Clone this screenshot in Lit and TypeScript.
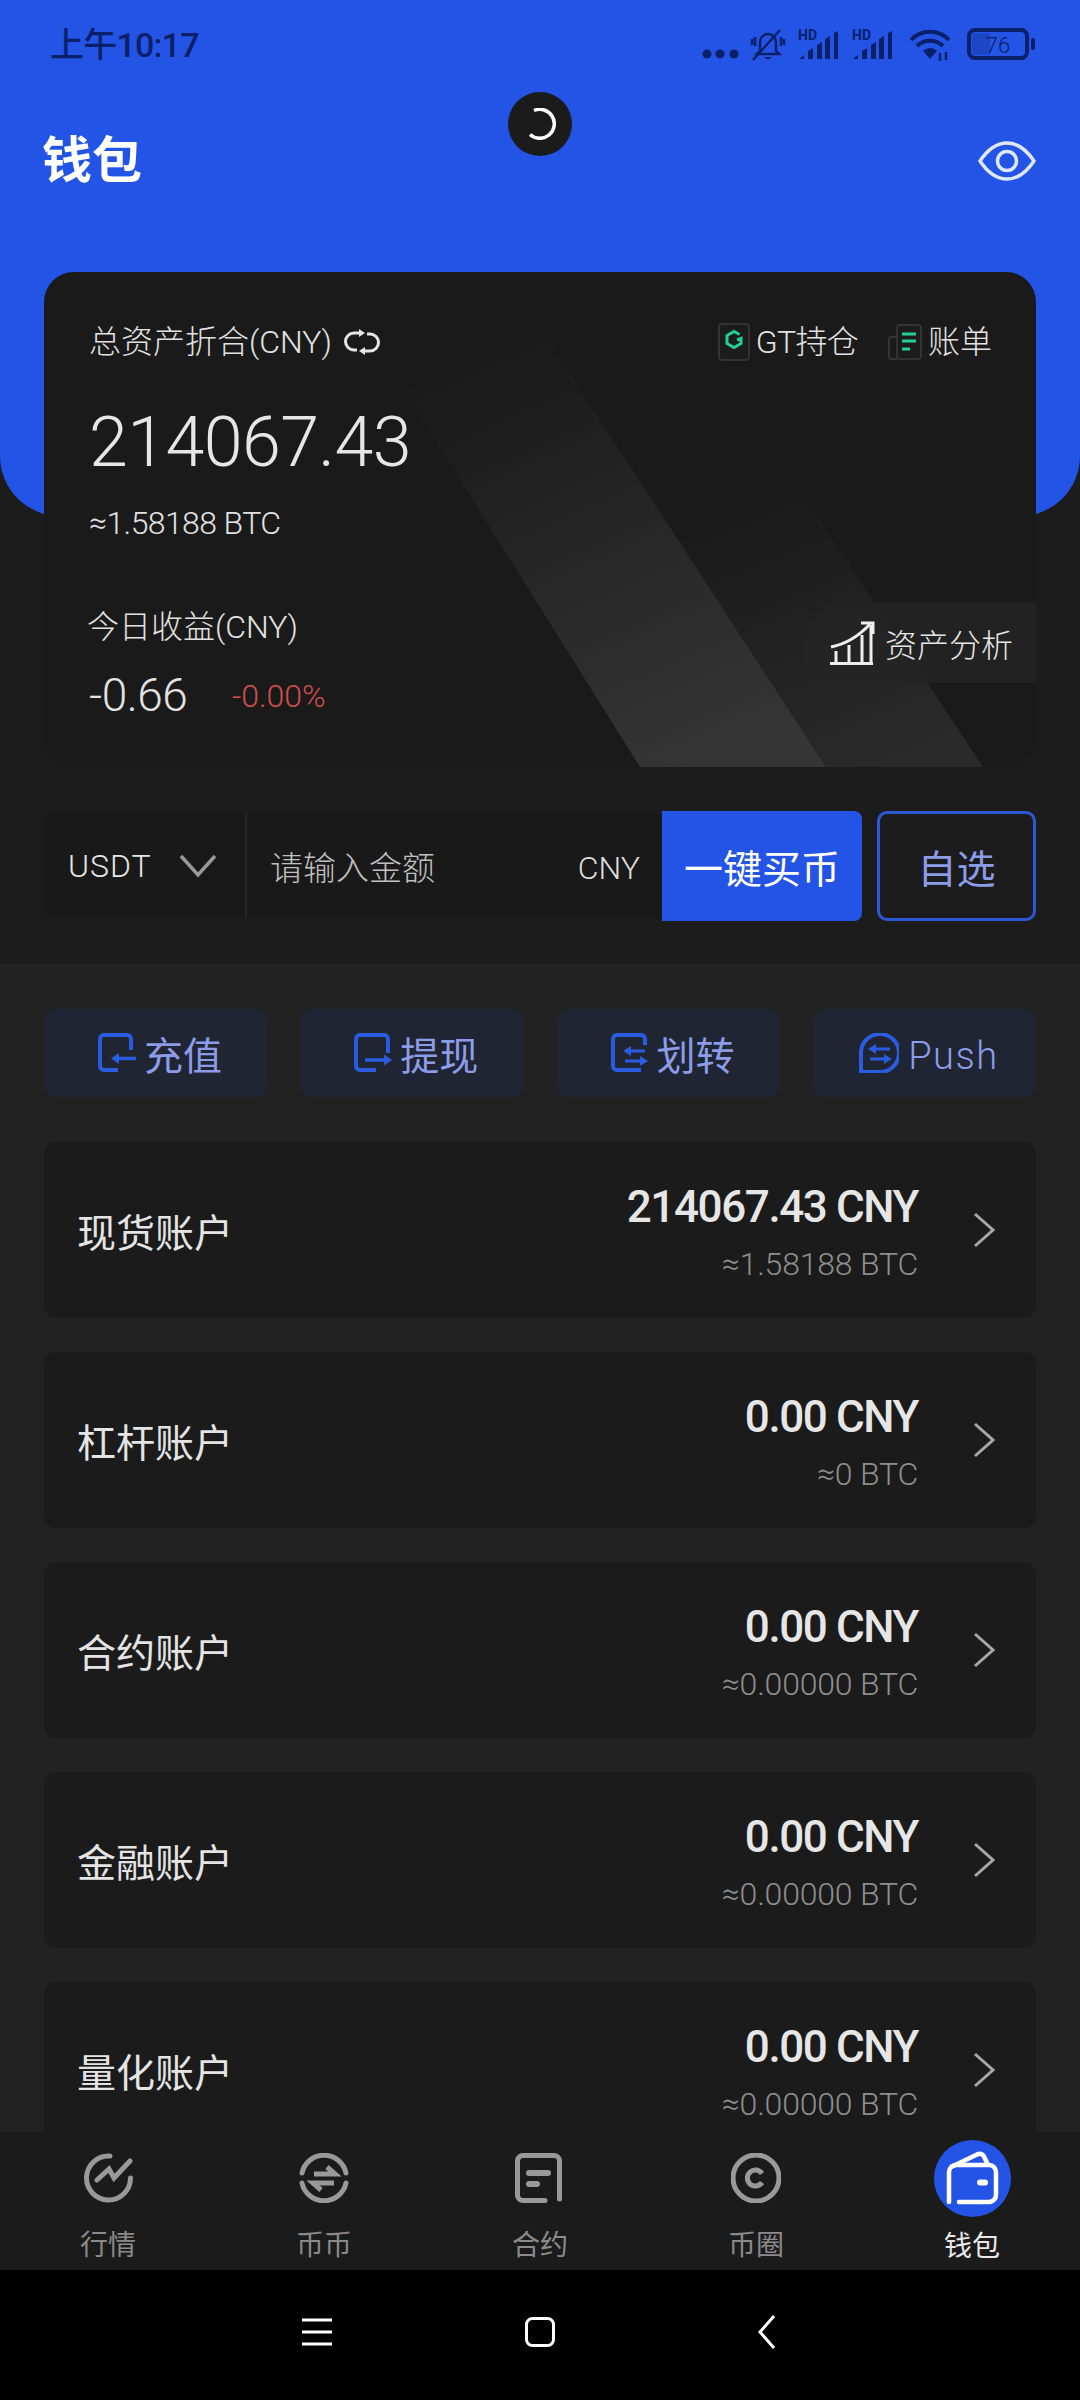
import { LitElement, html, css, svg } from "lit";
import { customElement } from "lit/decorators.js";

const accounts = [
  ["现货账户", "214067.43 CNY", "≈1.58188 BTC"],
  ["杠杆账户", "0.00 CNY", "≈0 BTC"],
  ["合约账户", "0.00 CNY", "≈0.00000 BTC"],
  ["金融账户", "0.00 CNY", "≈0.00000 BTC"],
  ["量化账户", "0.00 CNY", "≈0.00000 BTC"],
];

const signal = (cls: string) => html`<svg class=${cls} width="40" height="34" viewBox="0 0 40 34">
  <text x="0" y="12" font-family="Roboto" font-weight="700" font-size="14" fill="#0a2068">HD</text>
  <path d="M1 31 L6 27 V31Z M10 31 V23 l5 -3 V31Z M19 31 V17 l5 -3 V31Z M27 31 V11 l5 -3 V31Z M36 31 V5 l4 -2 V31Z" fill="#0a2068"/>
</svg>`;

const actionIcons = {
  in: svg`<path d="M33 17V6a4 4 0 0 0-4-4H6a4 4 0 0 0-4 4v27a4 4 0 0 0 4 4h14" fill="none" stroke="#2a5ce0" stroke-width="4"/><path d="M38 25.500H20" stroke="#2a5ce0" stroke-width="3.500"/><path d="M13 25.500l8-5.500v11z" fill="#2a5ce0"/>`,
  out: svg`<path d="M34 20V6a4 4 0 0 0-4-4H6a4 4 0 0 0-4 4v27a4 4 0 0 0 4 4h16" fill="none" stroke="#2a5ce0" stroke-width="4"/><path d="M11 27H30" stroke="#2a5ce0" stroke-width="3.500"/><path d="M38 27l-8-5.500v11z" fill="#2a5ce0"/>`,
  swap: svg`<path d="M34 12V6a4 4 0 0 0-4-4H6a4 4 0 0 0-4 4v27a4 4 0 0 0 4 4h24" fill="none" stroke="#2a5ce0" stroke-width="4"/><path d="M19 18H34M14 28H30" stroke="#2a5ce0" stroke-width="3"/><path d="M12 18l8-5v10z M37 28l-8-5v10z" fill="#2a5ce0"/>`,
  push: svg`<path d="M2 39V21a19 19 0 1 1 19 18z" fill="none" stroke="#2a5ce0" stroke-width="4" stroke-linejoin="round"/><path d="M16 16H31M11 26H26" stroke="#2a5ce0" stroke-width="3"/><path d="M9 16l8-5v10z M33 26l-8-5v10z" fill="#2a5ce0"/>`,
};

const actions: [string, keyof typeof actionIcons][] = [
  ["充值", "in"],
  ["提现", "out"],
  ["划转", "swap"],
  ["Push", "push"],
];

const tabIcons = [
  svg`<path d="M27 3A22 22 0 1 0 47.500 25" fill="none" stroke="#999" stroke-width="5" stroke-linecap="round"/><path d="M14 27L26 16l5 9L47 8" fill="none" stroke="#999" stroke-width="5" stroke-linecap="round"/>`,
  svg`<path d="M3 20A22.500 22.500 0 0 1 47 20M3 30A22.500 22.500 0 0 0 47 30" fill="none" stroke="#999" stroke-width="5" stroke-linecap="round"/><path d="M15 21H36L28 14M35 30H14L22 37" fill="none" stroke="#999" stroke-width="5"/>`,
  svg`<path d="M30 47.500H8a5.500 5.500 0 0 1-5.500-5.500V8A5.500 5.500 0 0 1 8 2.500H39a5.500 5.500 0 0 1 5.500 5.500V46" fill="none" stroke="#999" stroke-width="5" stroke-linecap="round"/><path d="M14 20H33M14 31H22" fill="none" stroke="#999" stroke-width="6" stroke-linecap="round"/>`,
  svg`<circle cx="25" cy="25" r="23" fill="none" stroke="#999" stroke-width="5"/><path d="M31 20.500A8 8 0 1 0 31 29.500" fill="none" stroke="#999" stroke-width="5"/>`,
];

const tabs = ["行情", "币币", "合约", "币圈"];

@customElement("app-root")
export class AppRoot extends LitElement {
  static styles = css`
    :host {
      display: flex;
      flex-direction: column;
      width: 1080px;
      height: 2400px;
      overflow: hidden;
      background: #000;
      font-family: Roboto, "Noto Sans CJK SC", sans-serif;
      color: #e6e6e6;
    }
    svg { display: block; flex: none; }
    .scroll { flex: 1; min-height: 0; overflow: hidden; background: #222222; }

    .top { background: #1c1c1c; padding-bottom: 43px; }
    .hero { background: #2354e6; height: 516px; border-radius: 0 0 60px 60px; box-sizing: border-box; }
    .status { height: 90px; display: flex; align-items: center; justify-content: space-between; padding: 0 45px 0 50px; box-sizing: border-box; color: #0a2068; }
    .time { font-size: 34px; line-height: 90px; font-weight: 500; letter-spacing: -0.800px; }
    .sicons { display: flex; align-items: center; }
    .s-bell { margin-left: 10px; }
    .s-sig1 { margin-left: 12px; }
    .s-sig2 { margin-left: 14px; }
    .s-wifi { margin-left: 17px; }
    .s-batt { margin-left: 16px; }
    .titlebar { display: flex; justify-content: space-between; align-items: center; height: 72px; padding: 0 44px 0 42px; margin-top: 35px; position: relative; }
    .title { font-size: 50px; font-weight: 700; color: #fff; line-height: 72px; }
    .spinner { position: absolute; left: 508px; top: -33px; width: 64px; height: 64px; border-radius: 50%; background: #1b1b1b; display: flex; align-items: center; justify-content: center; }

    .card { position: relative; margin: -244px 44px 0; height: 495px; border-radius: 30px; background: #1a1a1a; overflow: hidden; padding: 48px 0 0 45px; box-sizing: border-box; }
    .bands { position: absolute; inset: 0; }
    .row1 { position: relative; display: flex; justify-content: space-between; align-items: center; height: 44px; padding-right: 44px; }
    .label { font-size: 32px; line-height: 44px; display: flex; align-items: center; color: #e2e2e2; font-weight: 300; }
    .refresh { margin-left: 12px; }
    .links { display: flex; align-items: center; gap: 30px; }
    .link { display: flex; align-items: center; gap: 6px; font-size: 32px; line-height: 44px; color: #e2e2e2; font-weight: 300; }
    .link.gt { letter-spacing: -0.700px; }
    .big { position: relative; font-size: 70px; font-weight: 300; line-height: 80px; margin-top: 38px; letter-spacing: -0.600px; color: #e6e6e6; }
    .btc { position: relative; font-size: 32px; font-weight: 300; line-height: 40px; margin-top: 21px; letter-spacing: -0.600px; color: #e2e2e2; }
    .bottom { position: relative; display: flex; justify-content: space-between; align-items: flex-start; margin-top: 62px; }
    .today { margin-left: -2px; }
    .pnl { display: flex; align-items: center; margin-top: 21px; margin-left: 2px; }
    .pnl b { font-weight: 300; font-size: 46px; line-height: 50px; width: 143px; letter-spacing: -0.500px; color: #e2e2e2; }
    .pnl i { font-style: normal; font-weight: 300; font-size: 32px; color: #d24e4e; margin-top: 2px; }
    .analysis { display: flex; align-items: center; gap: 10px; height: 81px; padding: 0 23px 0 28px; background: rgba(36,36,36,.8); border-radius: 40px 0 0 40px; font-size: 32px; font-weight: 300; color: #e6e6e6; margin-top: -3px; }

    .buy { display: flex; height: 110px; margin: 44px 44px 0; }
    .select { width: 203px; margin: 3px 0; box-sizing: border-box; padding: 0 28px 0 24px; display: flex; justify-content: space-between; align-items: center; background: #191919; border-radius: 8px 0 0 8px; font-size: 32px; font-weight: 300; border-right: 2px solid #282828; letter-spacing: 1px; }
    .amount { flex: 1; margin: 3px 0; padding: 0 22px 0 23px; display: flex; justify-content: space-between; align-items: center; background: #191919; font-size: 33px; font-weight: 300; }
    .amount span:first-child { color: #c0c0c0; }
    .amount span:last-child { color: #ddd; font-size: 32px; padding-top: 4px; }
    .go { width: 200px; background: #2354e6; color: #fff; font-size: 39px; display: flex; align-items: center; justify-content: center; border-radius: 0 8px 8px 0; }
    .fav { width: 159px; margin-left: 15px; box-sizing: border-box; border: 3px solid #2c58d8; border-radius: 10px; color: #8d9ce8; font-size: 39px; display: flex; align-items: center; justify-content: center; }

    .actions { display: grid; grid-template-columns: repeat(4, 1fr); gap: 33px; margin: 45px 44px 0; }
    .action { height: 88px; background: #1f2533; border-radius: 12px; color: #8d9ce8; font-size: 39px; display: flex; align-items: center; justify-content: center; gap: 6px; padding-left: 9px; }
    .action .push { font-size: 38px; font-weight: 300; letter-spacing: 1.500px; padding-top: 6px; margin-left: 3px; }

    .accounts { display: flex; flex-direction: column; gap: 34px; margin: 45px 44px 0; }
    .acct { height: 176px; flex: none; background: #1b1b1b; border-radius: 12px; display: flex; align-items: center; padding: 0 41px 0 33px; box-sizing: border-box; }
    .acct .name { flex: 1; font-size: 39px; color: #e4e4e4; }
    .vals { text-align: right; margin-right: 55px; padding-top: 5px; }
    .vals b { display: block; font-weight: 500; font-size: 44px; line-height: 50px; letter-spacing: -1.400px; color: #e6e6e6; }
    .vals span { display: block; font-weight: 300; font-size: 32px; line-height: 40px; margin-top: 12px; letter-spacing: -0.200px; color: #8e8e8e; }

    .tabbar { flex: none; height: 138px; background: #1b1b1b; display: grid; grid-template-columns: repeat(5, 216px); box-sizing: border-box; }
    .tab { display: flex; flex-direction: column; align-items: center; color: #8a8a8a; font-size: 28px; line-height: 40px; position: relative; padding-top: 21px; }
    .tab span { margin-top: 23px; }
    .tab.on { color: #e8e8e8; padding-top: 8px; }
    .tab.on span { margin-top: 10px; }

    .nav { flex: none; height: 130px; box-sizing: border-box; background: #000; display: flex; align-items: center; justify-content: center; padding: 0 3px 6px 0; }
    .n-home { margin: 0 203px 0 193px; }
  `;

  render() {
    return html`
      <div class="scroll">
        <div class="top">
          <div class="hero">
            <div class="status">
              <span class="time">上午10:17</span>
              <div class="sicons">${this.statusIcons()}</div>
            </div>
            <div class="titlebar">
              <span class="title">钱包</span>
              <div class="spinner">
                <svg width="32" height="32" viewBox="0 0 32 32"><path d="M10 2.500A14.500 14.500 0 1 1 6 26.500" fill="none" stroke="#fff" stroke-width="3.500"/></svg>
              </div>
              <svg width="58" height="40" viewBox="0 0 58 40">
                <path d="M2 20C10 8 19 2 29 2s19 6 27 18C48 32 39 38 29 38S10 32 2 20z" fill="none" stroke="#dfe7fb" stroke-width="3.500" stroke-linejoin="round"/>
                <circle cx="29" cy="20" r="9.500" fill="none" stroke="#dfe7fb" stroke-width="3.500"/>
              </svg>
            </div>
          </div>
          <div class="card">
            <svg class="bands" width="992" height="495" viewBox="0 0 992 495">
              <defs>
                <linearGradient id="g1" x1="0.300" y1="0" x2="0.700" y2="1"><stop offset="0" stop-color="#1a1a1a"/><stop offset="0.150" stop-color="#1c1c1c"/><stop offset="1" stop-color="#353535"/></linearGradient>
                <linearGradient id="g2" x1="0.300" y1="0" x2="0.700" y2="1"><stop offset="0" stop-color="#1a1a1a"/><stop offset="0.150" stop-color="#1b1b1b"/><stop offset="1" stop-color="#2a2a2a"/></linearGradient>
              </defs>
              <path d="M636 270L734 185L939 495H782z" fill="url(#g2)"/>
              <path d="M362 121L479 30L782 495H596z" fill="url(#g1)"/>
            </svg>
            <div class="row1">
              <div class="label">总资产折合(CNY)
                <svg class="refresh" width="36" height="28" viewBox="0 0 36 28"><path d="M15 5H10a8.500 8.500 0 0 0 0 17h3M21 23h5a8.500 8.500 0 0 0 0-17h-3" fill="none" stroke="#e6e6e6" stroke-width="3"/><path d="M15 1l6 4-6 4zM21 19l-6 4 6 4z" fill="#e6e6e6"/></svg>
              </div>
              <div class="links">
                <div class="link gt">
                  <svg width="32" height="38" viewBox="0 0 32 38"><rect x="1" y="1" width="30" height="36" rx="3" fill="#1c1c1c" stroke="#333" stroke-width="2"/><path d="M21.500 11.500L16 8.500L9 12.500V20.500L16 24.500L23 20.500V15.500L19 17" fill="none" stroke="#22cf94" stroke-width="3"/></svg>
                  GT持仓
                </div>
                <div class="link">
                  <svg width="34" height="36" viewBox="0 0 34 36"><path d="M8 13H3a2 2 0 0 0-2 2v18a2 2 0 0 0 2 2h6" fill="none" stroke="#333" stroke-width="2"/><rect x="9" y="1" width="24" height="34" rx="3" fill="#1c1c1c" stroke="#333" stroke-width="2"/><path d="M14 10H28M14 17H28M14 25H22" fill="none" stroke="#22cf94" stroke-width="3"/></svg>
                  账单
                </div>
              </div>
            </div>
            <div class="big">214067.43</div>
            <div class="btc">≈1.58188 BTC</div>
            <div class="bottom">
              <div class="today">
                <div class="label">今日收益(CNY)</div>
                <div class="pnl"><b>-0.66</b><i>-0.00%</i></div>
              </div>
              <div class="analysis">
                <svg width="45" height="44" viewBox="0 0 45 44">
                  <path d="M0 42.500H43" stroke="#eee" stroke-width="3"/>
                  <path d="M6 42V30M19 42V24M32 42V14M41 42V4" stroke="#eee" stroke-width="3" fill="none"/>
                  <path d="M1 26C16 23 29 15 40 3" fill="none" stroke="#eee" stroke-width="3"/>
                  <path d="M31 2H43V13" fill="none" stroke="#eee" stroke-width="3"/>
                </svg>
                资产分析
              </div>
            </div>
          </div>
          <div class="buy">
            <div class="select">USDT
              <svg width="38" height="24" viewBox="0 0 38 24"><path d="M2 2L19 21L36 2" fill="none" stroke="#999" stroke-width="3.500"/></svg>
            </div>
            <div class="amount"><span>请输入金额</span><span>CNY</span></div>
            <div class="go">一键买币</div>
            <div class="fav">自选</div>
          </div>
        </div>
        <div class="actions">
          ${actions.map(
            ([t, k]) => html`<div class="action">
              <svg width="40" height="40" viewBox="0 0 40 40">${actionIcons[k]}</svg>
              <span class=${k === "push" ? "push" : ""}>${t}</span>
            </div>`,
          )}
        </div>
        <div class="accounts">
          ${accounts.map(
            ([n, v, s]) => html`<div class="acct">
              <span class="name">${n}</span>
              <div class="vals"><b>${v}</b><span>${s}</span></div>
              <svg width="22" height="36" viewBox="0 0 22 36"><path d="M2 2L20 18L2 34" fill="none" stroke="#a8a8a8" stroke-width="3"/></svg>
            </div>`,
          )}
        </div>
      </div>
      <div class="tabbar">
        ${tabs.map(
          (t, i) => html`<div class="tab">
            <svg width="50" height="50" viewBox="0 0 50 50">${tabIcons[i]}</svg>
            <span>${t}</span>
          </div>`,
        )}
        <div class="tab on">
          <svg width="77" height="77" viewBox="0 0 77 77">
            <circle cx="38.500" cy="38.500" r="38.500" fill="#2354e6"/>
            <path d="M25 62H55a7 7 0 0 0 7-7V32a7 7 0 0 0-7-7H22a7 7 0 0 0-7 7V62" fill="none" stroke="#fff" stroke-width="4.500" stroke-linecap="round"/>
            <path d="M17 27L43 14.500a5 5 0 0 1 7 2L54 25" fill="none" stroke="#fff" stroke-width="4.500"/>
            <path d="M46 42.500H51" stroke="#fff" stroke-width="6" stroke-linecap="round"/>
          </svg>
          <span>钱包</span>
        </div>
      </div>
      <div class="nav">
        <svg width="30" height="28" viewBox="0 0 30 28"><path d="M0 2H30M0 14H30M0 26H30" stroke="#fff" stroke-width="3"/></svg>
        <svg class="n-home" width="30" height="30" viewBox="0 0 30 30"><rect x="1.500" y="1.500" width="27" height="27" rx="6" fill="none" stroke="#fff" stroke-width="3"/></svg>
        <svg width="18" height="34" viewBox="0 0 18 34"><path d="M16 1L2 17L16 33" fill="none" stroke="#fff" stroke-width="3"/></svg>
      </div>
    `;
  }

  statusIcons() {
    return html`
      <svg width="38" height="34" viewBox="0 0 38 34"><g fill="#0a2068"><circle cx="5" cy="26" r="4.500"/><circle cx="18" cy="26" r="4.500"/><circle cx="32" cy="26" r="4.500"/></g></svg>
      <svg class="s-bell" width="36" height="34" viewBox="0 0 36 34"><g fill="none" stroke="#0a2068" stroke-width="2.500"><path d="M10 23V14a8 8 0 0 1 16 0v9l3 3H7z"/><path d="M3 32L30 2"/><path d="M2 11v6M5 9v9M31 9v9M34 11v6"/></g><path d="M14 29h8l-4 3z" fill="#0a2068"/></svg>
      ${signal("s-sig1")}
      ${signal("s-sig2")}
      <svg class="s-wifi" width="42" height="34" viewBox="0 0 42 34"><g fill="none" stroke="#0a2068" stroke-width="4"><path d="M2 12C12 1 30 1 40 12"/><path d="M8 18C15 11 27 11 34 18"/></g><path d="M14 23C18 19 24 19 28 23L21 31z" fill="#0a2068"/><path d="M31 25v8M37 24v8" stroke="#0a2068" stroke-width="2.500"/></svg>
      <svg class="s-batt" width="68" height="34" viewBox="0 0 68 34">
        <rect x="5" y="5" width="18" height="22" fill="#1b46c4"/>
        <rect x="2" y="2" width="58" height="28" rx="6" fill="none" stroke="#0a2068" stroke-width="4"/>
        <rect x="64" y="10" width="4" height="12" rx="2" fill="#0a2068"/>
        <text x="31" y="25" text-anchor="middle" font-family="Roboto" font-weight="300" font-size="22" fill="#0a2068">76</text>
      </svg>
    `;
  }
}
